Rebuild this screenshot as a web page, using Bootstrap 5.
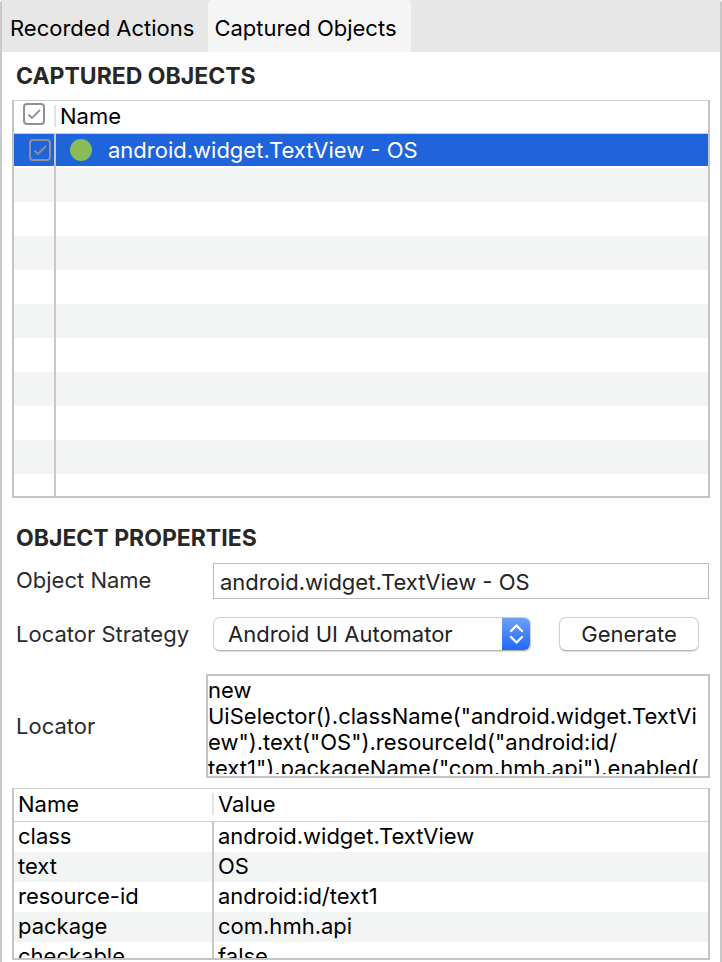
<!DOCTYPE html>
<html lang="en">
<head>
<meta charset="utf-8">
<meta name="viewport" content="width=device-width, initial-scale=1">
<title>Captured Objects</title>
<link href="https://cdn.jsdelivr.net/npm/bootstrap@5.3.0/dist/css/bootstrap.min.css" rel="stylesheet">
<style>
  body { font-family: Inter, "Liberation Sans", sans-serif; font-size: 22px; line-height: 26px; color: #000; background: #fff; }
  .panel { border: solid #c8c8c8; border-width: 0 2px; border-radius: 4px 4px 0 0; overflow: hidden; }
  .content-area { padding: 12px 10px 2px; min-height: 0; }

  /* Tabs */
  .tab-strip { background: #e7e7e7; height: 52px; }
  .tab-strip .nav-link { color: #000; padding: 15px 14px 11px 8px; border-radius: 4px 4px 0 0; }
  .tab-strip .nav-link.active { background: #f5f5f5; padding-left: 6px; }

  .section-title { font-size: 23px; line-height: 24px; font-weight: 700; color: #272727; margin: 0 0 12px; padding: 0 4px; }

  /* Tables */
  .grid-box { border: 2px solid #c4c4c4; border-top: 1px solid #d0d0d0; overflow: hidden; }
  .grid-box table { table-layout: fixed; width: 100%; border-collapse: separate; border-spacing: 0; }
  .grid-box th { font-weight: 400; height: 33px; padding: 0 4px 2px; border-bottom: 1px solid #d0d0d0; }
  .grid-box th + th { padding-left: 0; }
  .grid-box th + th > span { display: block; padding-left: 4px; line-height: 22px; border-left: 2px solid #e4e4e4; }
  .grid-box td { padding: 0 4px 2px; }
  .grid-box td + td { border-left: 2px solid #c8c8c8; }
  .grid-box tbody tr:nth-child(even) td { background: #f3f5f4; }
  .objects-grid { height: 398px; }
  .objects-grid tbody td { height: 34px; }
  .objects-grid tbody tr.picked td { padding-bottom: 2px; color: #fff; background: linear-gradient(#fff, #fff) bottom/100% 2px no-repeat #1f64da; }
  .objects-grid td:first-child { padding: 0 0 0 15px; }
  .objects-grid th:first-child { padding: 0 0 6px 9px; }
  .objects-grid td + td { padding-left: 14px; }
  .col-check { width: 40px; }
  .col-prop { width: 198px; }
  .props-grid { min-height: 90px; }
  .props-grid tbody td { height: 30px; }
  .tick { appearance: none; display: block; width: 22px; height: 22px; margin: 0; border: 2px solid #8e9199; border-radius: 4px;
    background: url("data:image/svg+xml,%3Csvg xmlns='http://www.w3.org/2000/svg' viewBox='0 0 18 18'%3E%3Cpath d='M3.500 9.500l3.500 3.500 8-8' fill='none' stroke='%238e9199' stroke-width='1.800'/%3E%3C/svg%3E") center/18px no-repeat; }
  .status-dot { width: 22px; height: 22px; border-radius: 50%; background: #87bc57; }

  /* Property form */
  .properties { padding: 28px 0 10px; }
  .properties .section-title { margin-bottom: 13px; }
  .name-row { margin-bottom: 18px; padding-right: 1px; }
  .name-row .field-label { padding-bottom: 2px; }
  .strategy-row { margin-bottom: 23px; }
  .field-label { width: 201px; flex: none; color: #2b2b2b; padding-left: 4px; }
  .locator-label { width: 194px; }
  .name-field { height: 36px; border: 1px solid #bcbcbc; padding: 2px 6px 0; color: #232323; outline: 0; min-width: 0; }
  .strategy, .generate { height: 34px; background: #fff; border: 1px solid #cfcfcf; border-bottom-color: #b4b4b4; border-radius: 7px; box-shadow: 0 1px 1px #0002; color: #232323; }
  .strategy { width: 318px; margin-right: 28px; overflow: hidden; }
  .strategy select { appearance: none; border: 0; background: #fff; color: #232323; padding: 0 0 0 14px; outline: 0; min-width: 0; }
  .stepper { width: 29px; margin: -1px; background: linear-gradient(#70a2f6, #1c67fa); }
  .generate { width: 140px; }
  .locator-box { border: 2px solid #c4c4c4; height: 104px; padding: 1px 0 2px; }
  .locator-box textarea { display: block; width: 100%; height: 97px; border: 0; padding: 0; resize: none; overflow: hidden; outline: 0; white-space: pre; color: #000; line-height: 26px; }
</style>
</head>
<body>
<main class="panel vh-100 d-flex flex-column">
  <nav class="tab-strip nav flex-nowrap flex-shrink-0" aria-label="Views">
    <a class="nav-link text-nowrap" href="#recorded">Recorded Actions</a>
    <a class="nav-link active text-nowrap" href="#captured" aria-current="page">Captured Objects</a>
  </nav>
  <div class="content-area d-flex flex-column flex-grow-1" id="captured">
    <section class="flex-shrink-0">
      <h2 class="section-title">CAPTURED OBJECTS</h2>
      <div class="grid-box objects-grid">
        <table>
          <colgroup><col class="col-check"><col></colgroup>
          <thead><tr>
            <th scope="col"><input class="tick" type="checkbox" checked aria-label="Select all"></th>
            <th scope="col"><span>Name</span></th>
          </tr></thead>
          <tbody>
            <tr class="picked">
              <td><input class="tick" type="checkbox" checked aria-label="Select android.widget.TextView - OS"></td>
              <td><div class="d-flex align-items-center gap-3"><span class="status-dot"></span><span>android.widget.TextView - OS</span></div></td>
            </tr>
            <tr><td></td><td></td></tr><tr><td></td><td></td></tr><tr><td></td><td></td></tr>
            <tr><td></td><td></td></tr><tr><td></td><td></td></tr><tr><td></td><td></td></tr>
            <tr><td></td><td></td></tr><tr><td></td><td></td></tr><tr><td></td><td></td></tr>
            <tr><td></td><td></td></tr>
          </tbody>
        </table>
      </div>
    </section>
    <form class="properties flex-shrink-0">
      <h2 class="section-title">OBJECT PROPERTIES</h2>
      <div class="name-row d-flex align-items-center">
        <label class="field-label" for="objectName">Object Name</label>
        <input class="name-field flex-grow-1" id="objectName" type="text" value="android.widget.TextView - OS">
      </div>
      <div class="strategy-row d-flex align-items-center">
        <label class="field-label" for="strategy">Locator Strategy</label>
        <div class="strategy d-flex">
          <select class="flex-grow-1" id="strategy"><option>Android UI Automator</option></select>
          <span class="stepper d-flex align-items-center justify-content-center">
            <svg width="15" height="22" viewBox="0 0 15 22" fill="none" stroke="#fff" stroke-width="2.4" stroke-linecap="round" stroke-linejoin="round" aria-hidden="true"><path d="M2 8l5.500-5.500L13 8M2 14l5.500 5.500L13 14"/></svg>
          </span>
        </div>
        <button class="generate p-0" type="button">Generate</button>
      </div>
      <div class="d-flex align-items-center">
        <label class="field-label locator-label" for="locator">Locator</label>
        <div class="locator-box flex-grow-1"><textarea id="locator" spellcheck="false">new
UiSelector().className("android.widget.TextVi
ew").text("OS").resourceId("android:id/
text1").packageName("com.hmh.api").enabled(</textarea></div>
      </div>
    </form>
    <section class="grid-box props-grid flex-grow-1">
      <table>
        <colgroup><col class="col-prop"><col></colgroup>
        <thead><tr><th scope="col">Name</th><th scope="col"><span>Value</span></th></tr></thead>
        <tbody>
          <tr><td>class</td><td>android.widget.TextView</td></tr>
          <tr><td>text</td><td>OS</td></tr>
          <tr><td>resource-id</td><td>android:id/text1</td></tr>
          <tr><td>package</td><td>com.hmh.api</td></tr>
          <tr><td>checkable</td><td>false</td></tr>
        </tbody>
      </table>
    </section>
  </div>
</main>
<script src="https://cdn.jsdelivr.net/npm/bootstrap@5.3.0/dist/js/bootstrap.bundle.min.js"></script>
</body>
</html>
